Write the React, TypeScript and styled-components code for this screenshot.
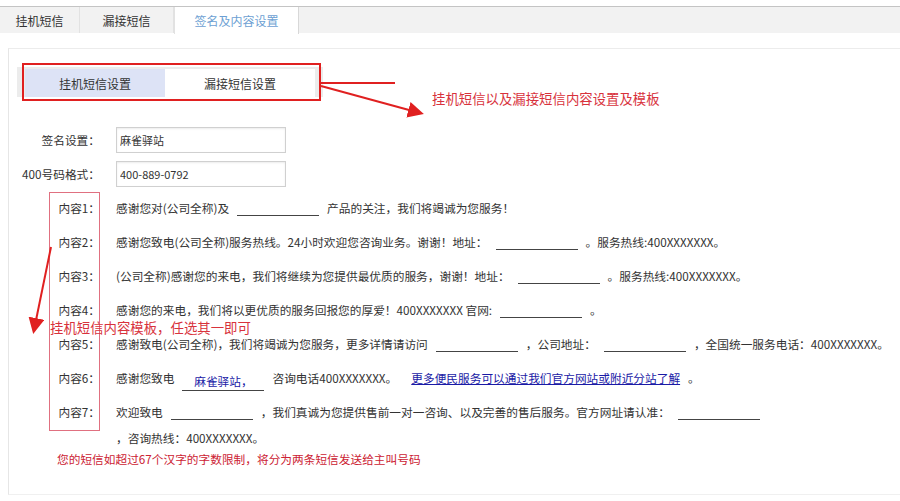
import styled, { createGlobalStyle } from "styled-components";

const GlobalStyle = createGlobalStyle`
  html, body {
    margin: 0;
    padding: 0;
    background: #ffffff;
  }
  body {
    font-family: "Noto Sans CJK SC", "Liberation Sans", sans-serif;
    font-size: 12px;
    color: #333;
  }
`;

const Page = styled.div`
  position: relative;
  width: 900px;
  height: 501px;
  overflow: hidden;
  padding-top: 6px;
  box-sizing: border-box;
`;

const TopBar = styled.div`
  display: flex;
  height: 26px;
  border-top: 1px solid #c4c4c4;
  background: #f2f2f2;
`;

const TopTab = styled.div<{ $w: number; $active?: boolean }>`
  width: ${(p) => p.$w}px;
  display: flex;
  align-items: center;
  justify-content: center;
  font-size: 12px;
  color: ${(p) => (p.$active ? "#6d9fd3" : "#333")};
  background: ${(p) => (p.$active ? "#ffffff" : "transparent")};
  border-right: 1px solid ${(p) => (p.$active ? "#d8d8d8" : "#e2e2e2")};
  border-left: ${(p) => (p.$active ? "1px solid #e2e2e2" : "none")};
  height: ${(p) => (p.$active ? "27px" : "26px")};
  box-sizing: border-box;
`;

const Panel = styled.div`
  margin: 15px 0 0 8px;
  border-top: 1px solid #ececec;
  border-left: 1px solid #e6e6e6;
  border-bottom: 1px solid #f0f0f0;
  padding: 18px 0 27px 8px;
  background: #fff;
  font-size: 11.7px;
`;

const SubTabs = styled.div`
  display: flex;
  width: 298px;
  height: 30px;
  background: #ececec;
  padding-left: 8px;
`;

const SubTab = styled.div<{ $active?: boolean }>`
  flex: ${(p) => (p.$active ? "0 0 140px" : "0 0 150px")};
  display: flex;
  align-items: center;
  justify-content: center;
  margin-top: 2px;
  font-size: 12px;
  color: #333;
  background: ${(p) => (p.$active ? "#dde3f6" : "#ffffff")};
`;

const Rows = styled.div`
  margin-top: 26px;
`;

const Row = styled.div`
  display: flex;
  align-items: flex-start;
  padding: 4px 0;
`;

const Label = styled.div`
  flex: 0 0 83px;
  text-align: right;
  line-height: 26px;
  white-space: nowrap;
`;

const Value = styled.div`
  margin-left: 16px;
  line-height: 26px;
  white-space: nowrap;
`;

const Input = styled.input`
  width: 170px;
  height: 26px;
  box-sizing: border-box;
  border: 1px solid #d0d0d0;
  box-shadow: inset 0 1px 2px rgba(0, 0, 0, 0.08);
  padding: 0 3px;
  font-family: "Noto Sans CJK SC", "Liberation Sans", sans-serif;
  font-size: 11px;
  color: #333;
  vertical-align: top;
`;

const Blank = styled.span`
  display: inline-block;
  width: 82px;
  height: 18px;
  margin: 0 8px;
  border-bottom: 1px solid #444;
  vertical-align: -3px;
  text-align: center;
  line-height: 18px;
  color: #1a1aa6;
`;

const Link = styled.a`
  color: #1a1aa6;
  text-decoration: underline;
  margin-left: 14px;
  margin-right: 8px;
`;

const Note = styled.div`
  margin-left: 40px;
  margin-top: -4px;
  line-height: 16px;
  color: #cc2233;
`;

const Overlay = styled.svg`
  position: absolute;
  left: 0;
  top: 0;
  pointer-events: none;
`;

const Callout = styled.div<{ $x: number; $y: number }>`
  position: absolute;
  left: ${(p) => p.$x}px;
  top: ${(p) => p.$y}px;
  font-size: 13.4px;
  line-height: 16px;
  color: #d8323c;
  white-space: nowrap;
`;

const X = "400XXXXXXX";

export default function App() {
  return (
    <Page>
      <GlobalStyle />
      <TopBar>
        <TopTab $w={80}>挂机短信</TopTab>
        <TopTab $w={94}>漏接短信</TopTab>
        <TopTab $w={125} $active>
          签名及内容设置
        </TopTab>
      </TopBar>
      <Panel>
        <SubTabs>
          <SubTab $active>挂机短信设置</SubTab>
          <SubTab>漏接短信设置</SubTab>
        </SubTabs>
        <Rows>
          <Row>
            <Label>签名设置：</Label>
            <Value>
              <Input defaultValue="麻雀驿站" />
            </Value>
          </Row>
          <Row>
            <Label>400号码格式：</Label>
            <Value>
              <Input defaultValue="400-889-0792" />
            </Value>
          </Row>
          <Row>
            <Label>内容1：</Label>
            <Value>
              感谢您对(公司全称)及<Blank />产品的关注，我们将竭诚为您服务！
            </Value>
          </Row>
          <Row>
            <Label>内容2：</Label>
            <Value>
              感谢您致电(公司全称)服务热线。24小时欢迎您咨询业务。谢谢！地址：
              <Blank />。服务热线:{X}。
            </Value>
          </Row>
          <Row>
            <Label>内容3：</Label>
            <Value>
              (公司全称)感谢您的来电，我们将继续为您提供最优质的服务，谢谢！地址：
              <Blank />。服务热线:{X}。
            </Value>
          </Row>
          <Row>
            <Label>内容4：</Label>
            <Value>
              感谢您的来电，我们将以更优质的服务回报您的厚爱！{X} 官网:
              <Blank />。
            </Value>
          </Row>
          <Row>
            <Label>内容5：</Label>
            <Value>
              感谢致电(公司全称)，我们将竭诚为您服务，更多详情请访问
              <Blank />，公司地址：<Blank />，全国统一服务电话：{X}。
            </Value>
          </Row>
          <Row>
            <Label>内容6：</Label>
            <Value>
              感谢您致电<Blank>麻雀驿站，</Blank>咨询电话{X}。
              <Link>更多便民服务可以通过我们官方网站或附近分站了解</Link>。
            </Value>
          </Row>
          <Row>
            <Label>内容7：</Label>
            <Value>
              欢迎致电<Blank />，我们真诚为您提供售前一对一咨询、以及完善的售后服务。官方网址请认准：
              <Blank />
              <br />，咨询热线：{X}。
            </Value>
          </Row>
        </Rows>
        <Note>您的短信如超过67个汉字的字数限制，将分为两条短信发送给主叫号码</Note>
      </Panel>

      <Overlay width="900" height="501" viewBox="0 0 900 501">
        <defs>
          <marker id="ah" markerWidth="8" markerHeight="8" refX="6" refY="4" orient="auto">
            <path d="M0,0 L8,4 L0,8 Z" fill="#e02020" />
          </marker>
        </defs>
        <rect x="23" y="64" width="297" height="36" fill="none" stroke="#e02020" strokeWidth="2" />
        <line x1="320" y1="83" x2="395" y2="83" stroke="#e02020" strokeWidth="2" />
        <line x1="321" y1="86" x2="420" y2="113" stroke="#e02020" strokeWidth="2" markerEnd="url(#ah)" />
        <rect x="49.5" y="192.5" width="50" height="238" fill="none" stroke="#e07080" strokeWidth="1" />
        <line x1="51" y1="247" x2="34" y2="330" stroke="#e02020" strokeWidth="2" markerEnd="url(#ah)" />
      </Overlay>
      <Callout $x={432} $y={90}>挂机短信以及漏接短信内容设置及模板</Callout>
      <Callout $x={50} $y={319}>挂机短信内容模板，任选其一即可</Callout>
    </Page>
  );
}
